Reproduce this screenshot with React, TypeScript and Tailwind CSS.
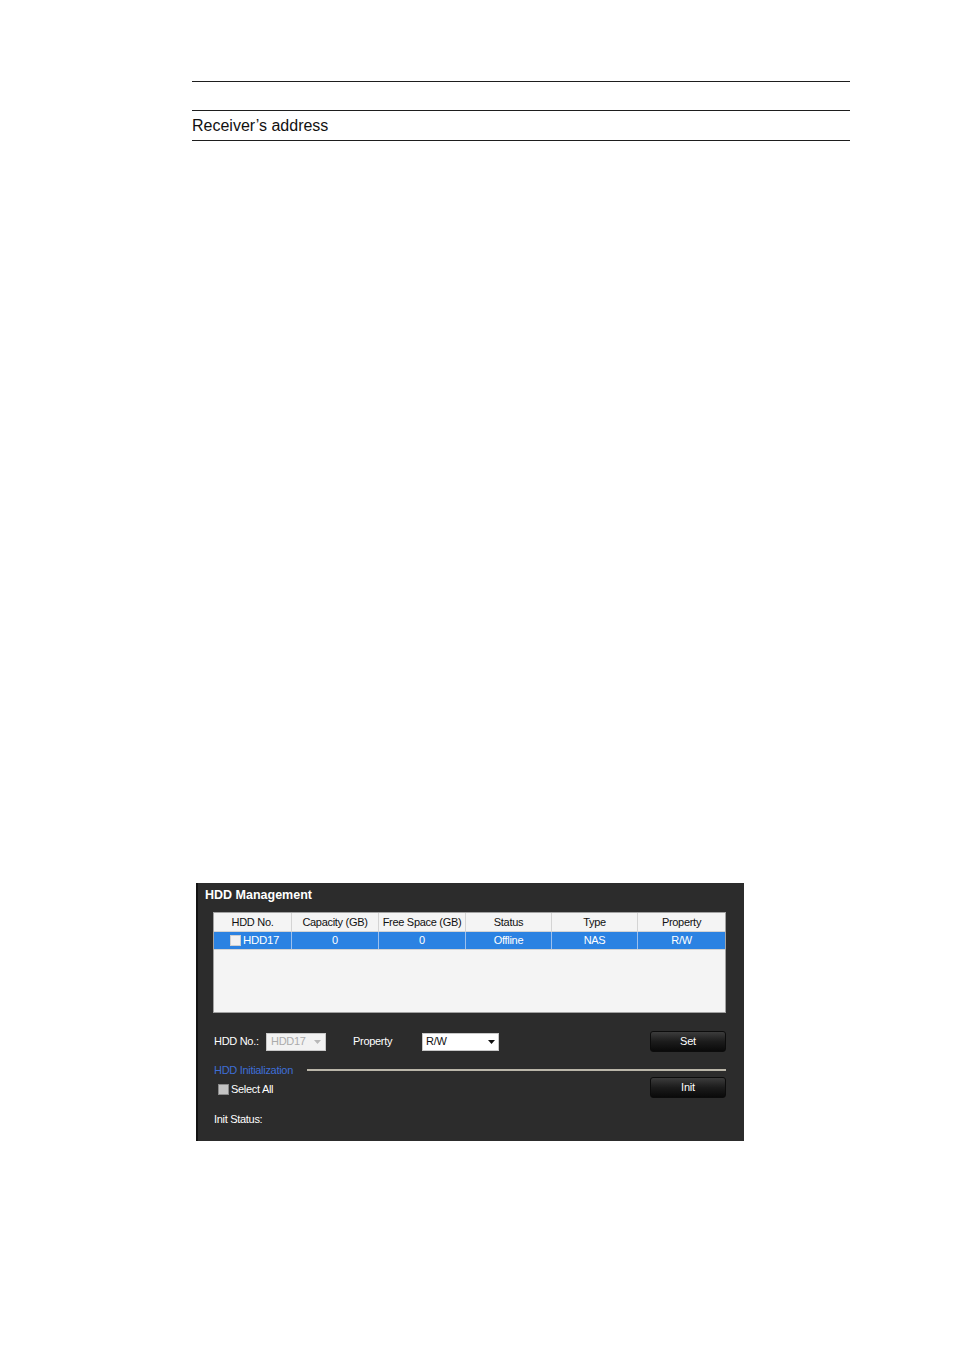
import React from "react";

const cols = [
  { label: "HDD No.", w: "w-[78px]" },
  { label: "Capacity (GB)", w: "w-[87px]" },
  { label: "Free Space (GB)", w: "w-[87px]" },
  { label: "Status", w: "w-[86px]" },
  { label: "Type", w: "w-[86px]" },
  { label: "Property", w: "w-[87px]" },
];

const rowVals = ["HDD17", "0", "0", "Offline", "NAS", "R/W"];

function Arrow({ color }: { color: string }) {
  return (
    <svg width="7" height="4" viewBox="0 0 7 4">
      <path d="M0 0 L7 0 L3.5 4 Z" fill={color} />
    </svg>
  );
}

function DarkButton({ label }: { label: string }) {
  return (
    <div className="w-[76px] h-[21px] rounded-[3px] border border-[#0c0c0c] bg-gradient-to-b from-[#3c3c3c] via-[#1c1c1c] to-[#0a0a0a] flex items-center justify-center text-white text-[11px] tracking-[-0.2px]">
      {label}
    </div>
  );
}

export default function App() {
  return (
    <div
      className="w-[954px] h-[1349px] bg-white overflow-hidden"
      style={{ fontFamily: '"Liberation Sans", Arial, sans-serif' }}
    >
      {/* Top document lines */}
      <div className="pt-[81px] ml-[192px] w-[658px]">
        <div className="h-px bg-[#1e1e1e]" />
        <div className="h-[28px]" />
        <div className="h-px bg-[#1e1e1e]" />
        <div className="h-[29px] flex items-center text-[16px] text-[#111] leading-none">
          Receiver’s address
        </div>
        <div className="h-px bg-[#1e1e1e]" />
      </div>

      {/* HDD Management panel */}
      <div className="mt-[742px] ml-[196px] w-[548px] h-[258px] bg-[#2c2c2c] border-l-2 border-[#121212] text-[11px] tracking-[-0.3px]">
        <div className="pt-[5px] pl-[7px] h-[19px] leading-[14px] text-white font-bold text-[12.5px] tracking-normal">
          HDD Management
        </div>

        {/* Table */}
        <div className="mt-[10px] ml-[15px] w-[513px] h-[101px] border border-[#a2a2a2] bg-[#f4f4f4]">
          <div className="flex h-[19px] border-b border-[#d4d4d4] bg-[#f4f4f4]">
            {cols.map((c, i) => (
              <div
                key={c.label}
                className={`${c.w} flex items-center justify-center text-[#111] ${
                  i < cols.length - 1 ? "border-r border-[#d4d4d4]" : ""
                }`}
              >
                {c.label}
              </div>
            ))}
          </div>
          <div className="flex h-[18px] border-b border-[#d4d4d4] bg-[#2b82e2]">
            {cols.map((c, i) => (
              <div
                key={c.label}
                className={`${c.w} flex items-center text-white ${
                  i === 0 ? "justify-start pl-[16px]" : "justify-center"
                } ${i < cols.length - 1 ? "border-r border-[#9cc0ee]" : ""}`}
              >
                {i === 0 ? (
                  <span className="flex items-center gap-[2px]">
                    <span className="w-[11px] h-[11px] bg-[#f2f2f2] border border-[#d0d0d0]" />
                    <span className="text-[11.5px]">{rowVals[i]}</span>
                  </span>
                ) : (
                  rowVals[i]
                )}
              </div>
            ))}
          </div>
        </div>

        {/* HDD No. / Property / Set row */}
        <div className="mt-[18px] ml-[16px] mr-[18px] h-[21px] flex items-center">
          <span className="text-white w-[52px]">HDD No.:</span>
          <div className="w-[60px] h-[18px] bg-[#f2f2f2] border border-[#c8c8c8] flex items-center justify-between pl-[4px] pr-[4px] text-[#ababab]">
            <span>HDD17</span>
            <Arrow color="#b8b8b8" />
          </div>
          <span className="text-white ml-[27px] w-[69px]">Property</span>
          <div className="w-[77px] h-[18px] bg-white border border-[#c8c8c8] flex items-center justify-between pl-[3px] pr-[3px] text-[#111]">
            <span>R/W</span>
            <Arrow color="#111" />
          </div>
          <div className="flex-1" />
          <DarkButton label="Set" />
        </div>

        {/* HDD Initialization */}
        <div className="mt-[12px] ml-[16px] mr-[18px] h-[12px] flex items-center">
          <span className="text-[#3e6ed6] leading-[12px]">HDD Initialization</span>
          <div className="flex-1 ml-[14px] h-[2px] bg-[#bab6a9]" />
        </div>

        <div className="mt-[1px] ml-[20px] mr-[18px] h-[21px] flex items-center">
          <span className="flex items-center pt-[3px]">
            <span className="w-[11px] h-[11px] bg-[#c4c4c4] border border-[#8a8a8a] mr-[2px]" />
            <span className="text-white">Select All</span>
          </span>
          <div className="flex-1" />
          <DarkButton label="Init" />
        </div>

        <div className="mt-[15px] ml-[16px] h-[12px] leading-[12px] text-white">Init Status:</div>
      </div>
    </div>
  );
}
